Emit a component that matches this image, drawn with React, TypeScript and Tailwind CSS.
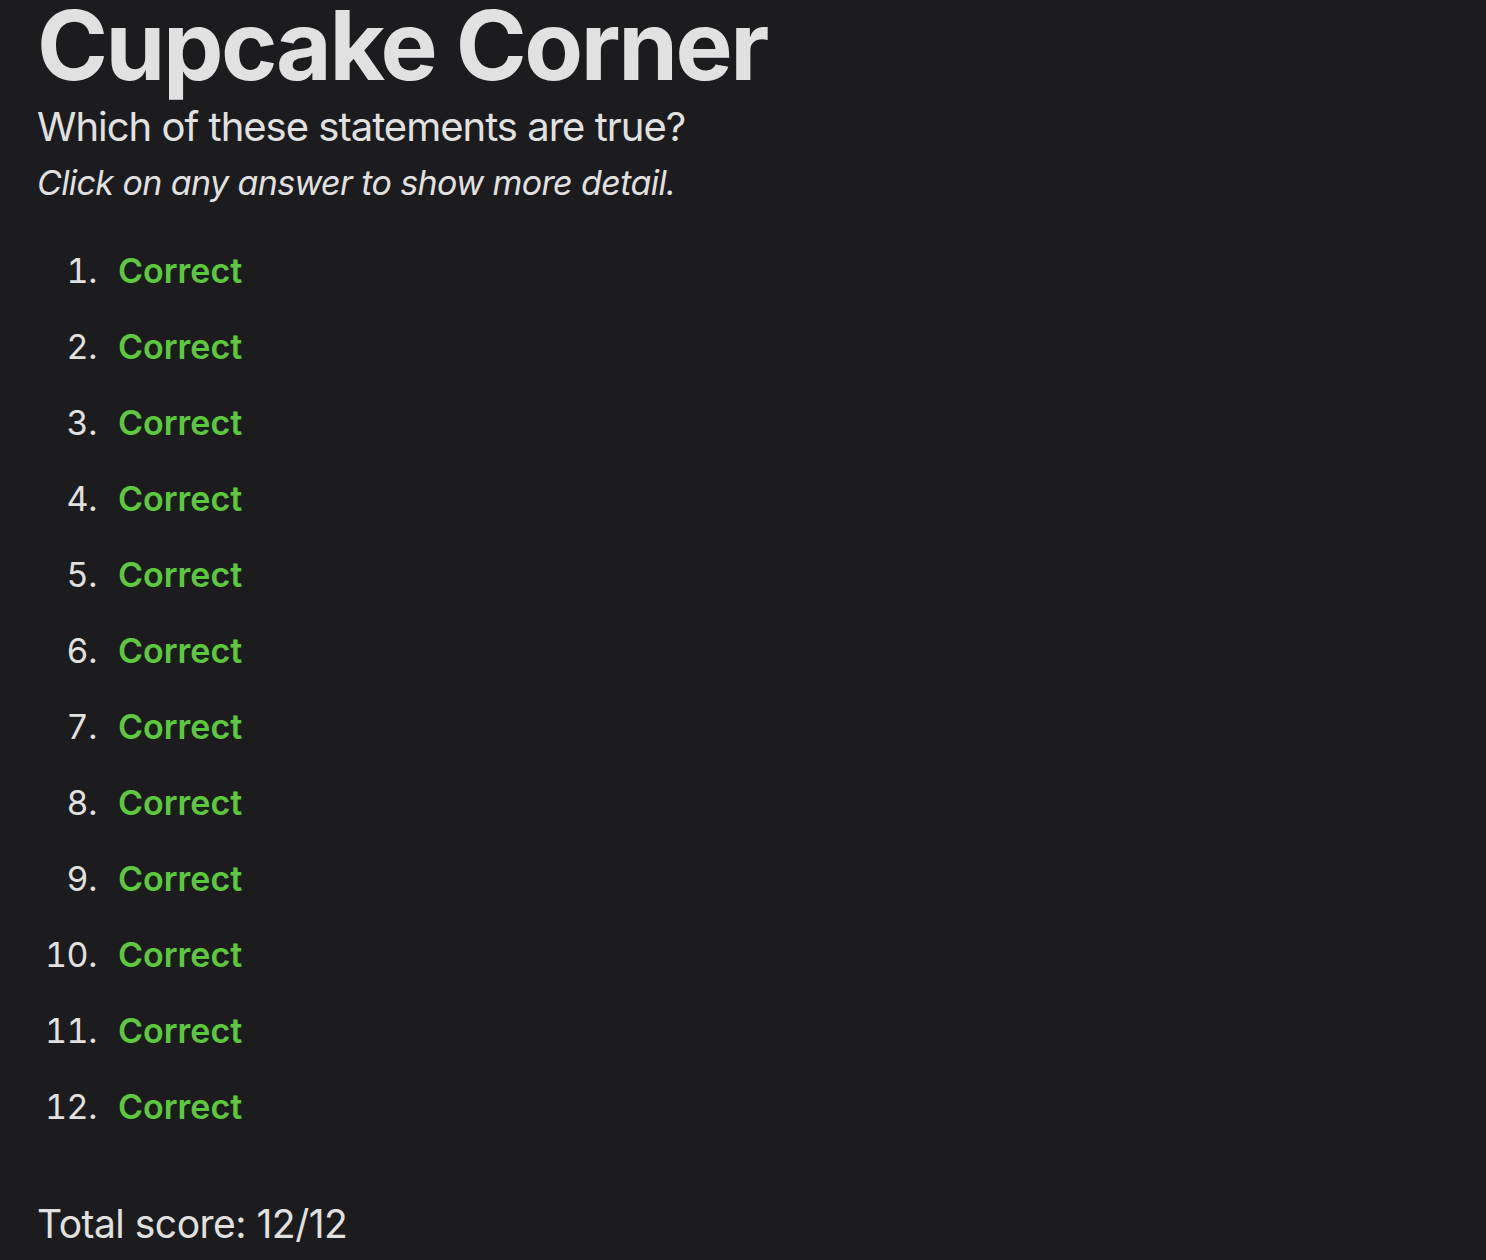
const answers = Array.from({ length: 12 }, (_, i) => ({ id: i + 1, result: "Correct" }));

export default function App() {
  return (
    <div
      className="min-h-[1260px] bg-[#1c1c1e] px-[37px] text-[#e1e1e1]"
      style={{ fontFamily: "Inter, 'Noto Sans', sans-serif" }}
    >
      <h1 className="text-[96px] font-bold leading-[90px] tracking-[-2.4px]">Cupcake Corner</h1>
      <p className="mt-[13px] text-[40px] leading-[48px] tracking-[-1px]">Which of these statements are true?</p>
      <p className="mt-[10px] text-[34px] italic leading-[44px] tracking-[-0.6px]">
        Click on any answer to show more detail.
      </p>

      <ol className="mt-[44px] flex flex-col gap-[32px]">
        {answers.map((a) => (
          <li key={a.id} className="flex items-baseline text-[34px] leading-[44px]">
            <span className="w-[60px] text-right tabular-nums tracking-[-0.4px]">{a.id}.</span>
            <button className="ml-[21px] font-semibold text-[#5cc83e]">{a.result}</button>
          </li>
        ))}
      </ol>

      <p className="mt-[71px] text-[39px] leading-[48px] tracking-[-0.5px]">Total score: 12/12</p>
    </div>
  );
}
